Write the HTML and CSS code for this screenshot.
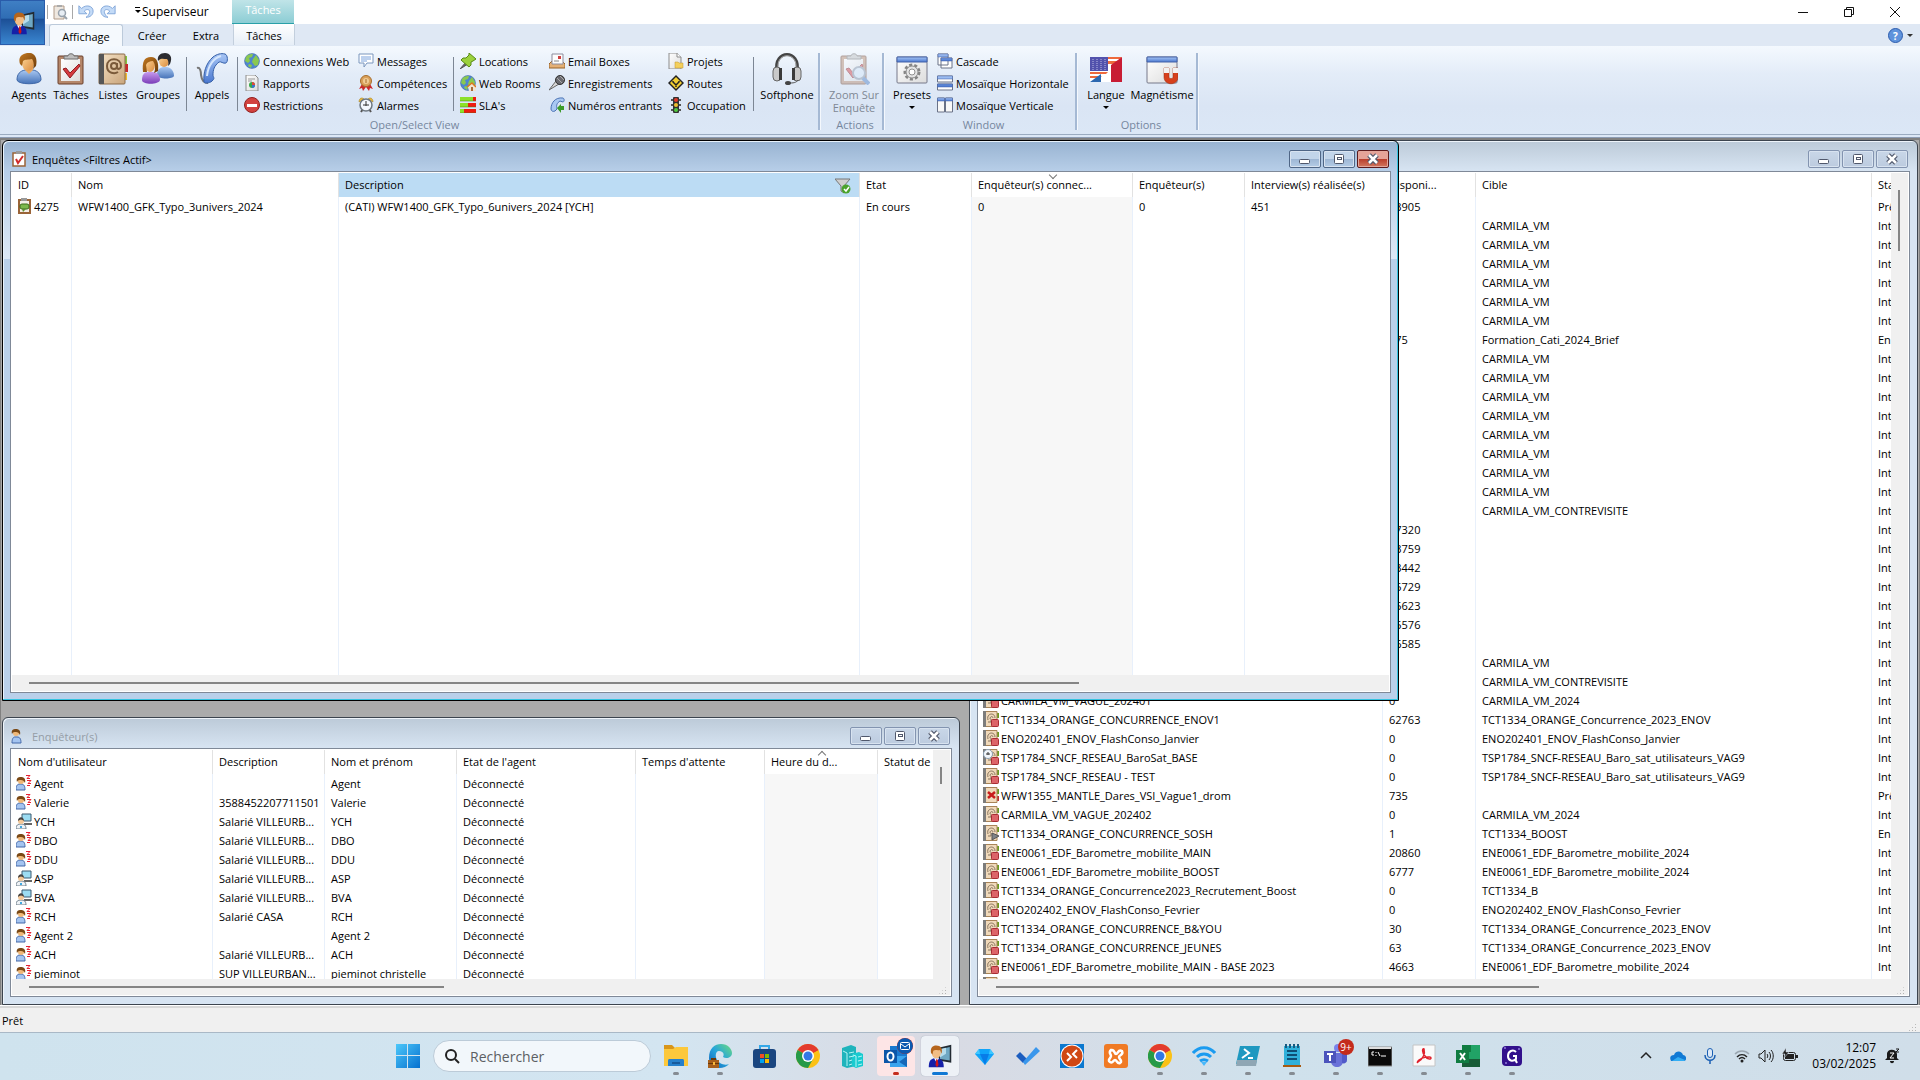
FILE: index.html
```html
<!DOCTYPE html>
<html lang="fr">
<head>
  <meta charset="UTF-8" />
  <meta name="viewport" content="width=device-width, initial-scale=1.0" />
  <title>Superviseur</title>
  <link rel="stylesheet" href="styles.css">
</head>

<body>
  <!-- icons -->
  <svg class="sprite" width="0" height="0" aria-hidden="true">
    <defs>
      <linearGradient id="gBlue" x1="0" y1="0" x2="0" y2="1"><stop offset="0" stop-color="#a9c8f2" /><stop offset="1" stop-color="#4673b8" /></linearGradient>
      <linearGradient id="gBar" x1="0" y1="0" x2="0" y2="1"><stop offset="0" stop-color="#a8c6f5" /><stop offset="1" stop-color="#4a78d0" /></linearGradient>
      <linearGradient id="gPurple" x1="0" y1="0" x2="0" y2="1"><stop offset="0" stop-color="#c79bee" /><stop offset="1" stop-color="#7a3cb8" /></linearGradient>
      <linearGradient id="gSkin" x1="0" y1="0" x2="1" y2="1"><stop offset="0" stop-color="#ffd89a" /><stop offset="1" stop-color="#d98a3c" /></linearGradient>
      <linearGradient id="gHair" x1="0" y1="0" x2="1" y2="1"><stop offset="0" stop-color="#c47a22" /><stop offset="1" stop-color="#6b3a08" /></linearGradient>
      <linearGradient id="gPaper" x1="0" y1="0" x2="1" y2="1"><stop offset="0" stop-color="#fff" /><stop offset="1" stop-color="#dcdcdc" /></linearGradient>
      <linearGradient id="gBook" x1="0" y1="0" x2="1" y2="1"><stop offset="0" stop-color="#f6e3c6" /><stop offset="1" stop-color="#c9a57c" /></linearGradient>
      <linearGradient id="gWin" x1="0" y1="0" x2="1" y2="1"><stop offset="0" stop-color="#4cc8fa" /><stop offset="1" stop-color="#0670cf" /></linearGradient>
      <linearGradient id="gEdge" x1="0" y1="1" x2="1" y2="0"><stop offset="0" stop-color="#0f5fb8" /><stop offset=".5" stop-color="#26a5dc" /><stop offset="1" stop-color="#6fdc7c" /></linearGradient>
    </defs>

    <symbol id="i-user" viewBox="0 0 32 32">
      <path d="M4 27c0-6 3-9 8-10h8c5 1 8 4 8 10-1 5-23 5-24 0z" fill="url(#gBlue)" stroke="#3f68a8" />
      <path d="M12 17l4 4 4-4v-3h-8z" fill="#e8a862" />
      <ellipse cx="15" cy="10" rx="6" ry="8" fill="url(#gSkin)" />
      <path d="M7 11c-2-6 1-10 7-11 7-1 11 4 9 13l-3 3c1-4 1-7-1-10-4 1-7 0-9 2l-1 5z" fill="url(#gHair)" />
    </symbol>
    <symbol id="i-task" viewBox="0 0 32 32">
      <rect x="3" y="3" width="25" height="28" rx="1" fill="#b5876a" stroke="#6a3f2a" />
      <path d="M6 6h19v22H6z" fill="url(#gPaper)" />
      <path d="M8 16l3-1 4 5 9-9 1 2-10 12z" fill="#d63a3e" stroke="#8e1c20" />
      <path d="M9 6V3h4c0-3 6-3 6 0h4v3z" fill="#bdbdbd" stroke="#6e6e6e" />
    </symbol>
    <symbol id="i-book" viewBox="0 0 32 32">
      <path d="M27 3h3v8h-3z" fill="#86c440" /><path d="M27 11h4v8h-4z" fill="#c8282c" /><path d="M27 20h3v7h-3z" fill="#f0b92e" />
      <rect x="2" y="1" width="26" height="30" rx="1" fill="url(#gBook)" stroke="#8a6a48" />
      <path d="M2 1h5v30H2z" fill="#565656" />
      <circle cx="17" cy="13" r="3" fill="none" stroke="#7a5a3a" stroke-width="2" />
      <path d="M20 10v5c2 2 4 0 4-2 0-9-14-9-14 0 0 8 8 8 11 6" fill="none" stroke="#7a5a3a" stroke-width="2" />
    </symbol>
    <symbol id="i-group" viewBox="0 0 32 32">
      <path d="M15 22c0-5 2-7 6-8h4c5 1 7 5 7 9-1 3-15 4-17-1z" fill="url(#gBlue)" />
      <ellipse cx="22" cy="8" rx="5" ry="6" fill="url(#gSkin)" />
      <path d="M16 8c-1-5 2-8 7-8 5 0 8 4 5 11l-2 2c1-4 0-6-1-7-3 0-6-1-8 1z" fill="#2c2c30" />
      <path d="M0 27c0-5 2-8 6-8h5c5 0 7 4 7 8-1 5-18 5-18 0z" fill="url(#gPurple)" />
      <ellipse cx="8" cy="12" rx="5" ry="7" fill="url(#gSkin)" />
      <path d="M1 19C0 9 2 4 9 4c6 0 8 6 7 14l-4 2c2-5 1-9-1-12-3 0-6 1-7 4l1 7z" fill="url(#gHair)" />
    </symbol>
    <symbol id="i-phone" viewBox="0 0 32 32">
      <path d="M1 15c3-1 4 3 4 7 1 7 4 8 7 8" fill="none" stroke="#777" stroke-width="2" />
      <path d="M29 1c3 1 3 8 1 9-3 1-5-2-7-1-5 4-6 8-6 13 0 2 2 3 0 5-2 3-8 4-9 2-1-9 2-19 9-25 4-3 8-4 12-3z" fill="url(#gBar)" stroke="#3560a8" />
      <path d="M25 3c-7 2-13 9-14 20" fill="none" stroke="#d5e6fc" stroke-width="2" />
    </symbol>
    <symbol id="i-globe" viewBox="0 0 16 16">
      <circle cx="8" cy="8" r="7.500" fill="#4f86cf" stroke="#3b63a0" stroke-width=".5" />
      <path d="M2 4c2-3 5-3 7-3l-1 3-3 1 1 3-2 2-3-2zM9 6l3-4 3 5-1 5-3 1-3-4zM5 11l3 1-1 3-3-2z" fill="#8ac850" />
    </symbol>
    <symbol id="i-report" viewBox="0 0 16 16">
      <path d="M2 0h9l3 3v13H2z" fill="url(#gPaper)" stroke="#8c8c8c" />
      <path d="M4 4h7M4 6h4" stroke="#999" />
      <circle cx="8" cy="10" r="3" fill="#38a84a" /><path d="M8 10V7a3 3 0 013 3z" fill="#e0483c" /><path d="M8 10h3a3 3 0 01-3 3z" fill="#3a70d0" />
    </symbol>
    <symbol id="i-stop" viewBox="0 0 16 16">
      <circle cx="8" cy="8" r="7.500" fill="#d2423f" stroke="#93211f" /><path d="M3 7h10v3H3z" fill="#fff" />
    </symbol>
    <symbol id="i-msg" viewBox="0 0 16 16">
      <path d="M1 1h14v9H9l-3 4v-4H1z" fill="#fff" stroke="#7b96bd" /><path d="M3 4h10M3 6h10M3 8h6" stroke="#7aa2dc" />
    </symbol>
    <symbol id="i-medal" viewBox="0 0 16 16">
      <path d="M4 9l-3 5 3-1 1 3 3-4 3 4 1-3 3 1-3-5z" fill="#cc2b2b" />
      <circle cx="8" cy="6" r="5.500" fill="#d9a05a" stroke="#a66d2c" /><circle cx="8" cy="6" r="3" fill="#f0cb94" /><path d="M8 4v4" stroke="#a66d2c" />
    </symbol>
    <symbol id="i-alarm" viewBox="0 0 16 16">
      <path d="M1 5c0-4 3-5 5-3zM15 5c0-4-3-5-5-3z" fill="#e9b93b" stroke="#9a7416" stroke-width=".5" />
      <path d="M3 15l2-3M13 15l-2-3" stroke="#555" stroke-width="2" />
      <circle cx="8" cy="8" r="6" fill="#f4f8ff" stroke="#6e7780" stroke-width="1.500" /><path d="M8 4v5M5 8h6" stroke="#333" />
    </symbol>
    <symbol id="i-pin" viewBox="0 0 16 16">
      <path d="M0 16l6-7 2 2z" fill="#666" stroke="#555" />
      <path d="M9 0l7 6-3 2-2 1v3l-2 2-8-7 2-2h3l3-3z" fill="#9bd13c" stroke="#588a14" />
    </symbol>
    <symbol id="i-globehome" viewBox="0 0 16 16">
      <use href="#i-globe" /><path d="M8 12l4-4 4 4v4H9z" fill="#f0e4d4" /><path d="M7 12l5-4 4 4" fill="none" stroke="#e07820" stroke-width="1.500" /><path d="M11 12h2v4h-2z" fill="#a86a3a" />
    </symbol>
    <symbol id="i-sla" viewBox="0 0 16 16">
      <path d="M0 0h16v4H0zM0 6h16v4H0zM0 12h16v4H0z" fill="#ee1c10" /><path d="M0 0h13v4H0zM0 6h8v4H0zM0 12h4v4H0z" fill="#8de02a" />
      <path d="M0 4h16M0 10h16M0 16h16" stroke="#3c7a10" stroke-width=".5" />
    </symbol>
    <symbol id="i-mail" viewBox="0 0 16 16">
      <path d="M0 11l3-3h10l3 3v4H0z" fill="#e4b076" stroke="#9a6428" /><path d="M3 1h11v10H3z" fill="#fdfdfd" stroke="#8c8c9c" /><path d="M9 3h3v3H9z" fill="#cf4040" /><path d="M5 8h5" stroke="#888" />
    </symbol>
    <symbol id="i-mic" viewBox="0 0 16 16">
      <path d="M0 15l7-9 3 3z" fill="#d8d8d8" stroke="#666" /><circle cx="11" cy="5" r="4.500" fill="#6a6a70" stroke="#333" /><path d="M8 3l5 5M11 1l4 4" stroke="#aaa" />
    </symbol>
    <symbol id="i-phonein" viewBox="0 0 16 16">
      <path d="M14 1c2 1 1 4 0 4l-3-1c-3 2-4 4-3 8l-2 2c-2 1-4 0-4-2 0-6 4-12 12-11z" fill="#a9c8f2" stroke="#4a72b4" /><path d="M8 11l4-4v2h3v4h-3v3z" fill="#3c9c2a" />
    </symbol>
    <symbol id="i-project" viewBox="0 0 16 16">
      <path d="M1 0h8l4 4v12H1z" fill="url(#gPaper)" stroke="#8c8c8c" /><path d="M9 0v4h4" fill="#fff" stroke="#8c8c8c" /><path d="M7 9h3l1 1h4v5H7z" fill="#f4cf5c" stroke="#c09428" stroke-width=".5" />
    </symbol>
    <symbol id="i-route" viewBox="0 0 16 16">
      <path d="M8 0l8 8-8 8-8-8z" fill="#222" /><path d="M8 2l6 6-6 6-6-6z" fill="#f3cf31" /><path d="M5 6v1l3 3 3-3V6M8 9v3" fill="none" stroke="#222" stroke-width="1.500" />
    </symbol>
    <symbol id="i-traffic" viewBox="0 0 16 16">
      <path d="M3 3h10M3 8h10M3 13h10" stroke="#555" stroke-width="2" /><rect x="5" y="0" width="6" height="16" rx="1" fill="#333" />
      <circle cx="8" cy="3" r="2" fill="#e03a2a" /><circle cx="8" cy="8" r="2" fill="#f0c030" /><circle cx="8" cy="13" r="2" fill="#50c840" />
    </symbol>
    <symbol id="i-headset" viewBox="0 0 32 32">
      <path d="M6 18C2-4 30-4 26 18" fill="none" stroke="#444" stroke-width="3" /><path d="M7 14C6-1 26-1 25 14" fill="none" stroke="#aaa" />
      <rect x="2" y="14" width="8" height="14" rx="4" fill="#c9c9c9" stroke="#666" /><rect x="22" y="14" width="8" height="14" rx="4" fill="#c9c9c9" stroke="#666" />
      <path d="M8 15h3v12H8zM21 15h3v12h-3z" fill="#3a3a3a" /><path d="M27 27c-2 3-5 3-9 3" fill="none" stroke="#555" /><ellipse cx="17" cy="30" rx="3" ry="2" fill="#444" />
    </symbol>
    <symbol id="i-zoom" viewBox="0 0 32 32">
      <use href="#i-task" /><circle cx="21" cy="20" r="6" fill="#d5e8fa" stroke="#8795a6" stroke-width="2" /><path d="M25 25l6 6" stroke="#4f7fc4" stroke-width="4" />
    </symbol>
    <symbol id="i-window" viewBox="0 0 32 32">
      <rect x="1" y="4" width="30" height="26" rx="1" fill="url(#gPaper)" stroke="#76798a" /><path d="M1 4h30v5H1z" fill="url(#gBar)" stroke="#4563a8" />
    </symbol>
    <symbol id="i-presets" viewBox="0 0 32 32">
      <use href="#i-window" /><circle cx="16" cy="19" r="7" fill="#e4e4e4" stroke="#858585" stroke-width="3" stroke-dasharray="3 2" /><circle cx="16" cy="19" r="6" fill="#e4e4e4" stroke="#909090" /><circle cx="16" cy="19" r="3" fill="#fff" stroke="#909090" />
    </symbol>
    <symbol id="i-cascade" viewBox="0 0 16 16">
      <path d="M1 1h10v11H1zM4 5h11v10H4z" fill="#fff" stroke="#6a7287" /><path d="M1 1h10v3H1zM4 5h11v3H4z" fill="url(#gBar)" stroke="#4563a8" stroke-width=".5" />
    </symbol>
    <symbol id="i-horiz" viewBox="0 0 16 16">
      <path d="M.5 1h15v6H.5zM.5 9h15v6H.5z" fill="#fff" stroke="#6a7287" /><path d="M.5 1h15v3H.5zM.5 9h15v3H.5z" fill="url(#gBar)" stroke="#4563a8" stroke-width=".5" />
    </symbol>
    <symbol id="i-vert" viewBox="0 0 16 16">
      <path d="M.5 1h7v14h-7zM8.500 1h7v14h-7z" fill="#f8f8f8" stroke="#6a7287" /><path d="M.5 1h7v3h-7zM8.500 1h7v3h-7z" fill="url(#gBar)" stroke="#4563a8" stroke-width=".5" />
    </symbol>
    <symbol id="i-flag" viewBox="0 0 32 32">
      <path d="M0 4h32v25H0z" fill="#fff" /><path d="M18 4h14l-2 2H18zM18 8h10l-3 3h-7zM0 19h18l-2 2H0zM0 23h12l-3 2H0z" fill="#ee6a3c" /><path d="M0 4h18v14H0z" fill="#5252ac" />
      <path d="M3 6v11M7 6v11M11 6v11M15 6v11" stroke="#b9b9e4" stroke-dasharray="1 1" /><path d="M21 12l11-8v25H21z" fill="#c81c34" /><path d="M0 29l11-8v8z" fill="#2c68b0" />
    </symbol>
    <symbol id="i-magnet" viewBox="0 0 32 32">
      <use href="#i-window" /><path d="M18 15h5v9c0 2 4 2 4 0v-9h5v9c0 9-14 9-14 0z" fill="#d6401c" stroke="#992408" stroke-width=".5" /><path d="M18 15h5v5h-5zM27 15h5v5h-5z" fill="#f1f1f1" />
    </symbol>
    <symbol id="i-boss" viewBox="0 0 32 32">
      <path d="M14 5l17-4v24l-17-3z" fill="#222b33" /><path d="M16 7l13-3v18l-13-2z" fill="#6fa8c4" /><path d="M16 7l8-2v8l-8 5z" fill="#b6dcec" />
      <path d="M1 31c0-8 2-11 8-12h4c6 1 8 5 8 12z" fill="#1420a8" /><path d="M8 19l3 5 4-5z" fill="#fff" /><path d="M11 20l2 1 1 7-2 3-2-3z" fill="#d01818" />
      <ellipse cx="11" cy="12" rx="6" ry="7" fill="#f2bd85" /><path d="M4 12C3 5 6 2 11 2c6 0 9 4 7 11l-2-5c-4 1-6-1-9 1l-1 5z" fill="#b5651d" />
    </symbol>
    <symbol id="i-preview" viewBox="0 0 16 16">
      <path d="M2 2h10v13H2z" fill="#efe8e0" stroke="#b09a88" /><path d="M5 1h5v2H5z" fill="#aaa" /><circle cx="10" cy="9" r="3.500" fill="#e8eef4" stroke="#98a2ac" stroke-width="1.500" /><path d="M12 12l3 3" stroke="#98a2ac" stroke-width="2" />
    </symbol>
    <symbol id="i-undo" viewBox="0 0 18 16">
      <path d="M1 1v9h9L7 7c3-3 7-2 6 2-1 2-2 4-4 5 5 0 8-3 8-7 0-6-8-8-13-3z" fill="#c4dbf7" stroke="#7ba1d6" />
    </symbol>
    <symbol id="i-funnel" viewBox="0 0 16 16">
      <path d="M0 1h15l-6 7v7l-3-2V8z" fill="#cfcfcf" stroke="#777" /><circle cx="11" cy="11" r="4.500" fill="#4aa32c" /><path d="M9 11l2 2 3-4" fill="none" stroke="#fff" stroke-width="1.500" />
    </symbol>
    <symbol id="i-tasksm" viewBox="0 0 16 16">
      <path d="M2 2h12v13H2z" fill="#fff" stroke="#9a6438" stroke-width="1.500" /><path d="M5 0h6v3H5z" fill="#999" /><path d="M5 8l2 4 5-7" fill="none" stroke="#d02c2c" stroke-width="2" />
    </symbol>
    <symbol id="i-taskmsg" viewBox="0 0 16 16">
      <path d="M3 2h11v13H3z" fill="#f5efe8" stroke="#9a6438" stroke-width="2" /><path d="M5 0h6v3H5z" fill="#999" /><rect x="4" y="6" width="9" height="5" rx="2" fill="#7cb84c" stroke="#3c6e1c" /><path d="M6 11l1 3 3-3z" fill="#5c9034" />
    </symbol>
    <symbol id="i-usersm" viewBox="0 0 16 16">
      <path d="M1 15c0-4 1-6 3-6h2c3 0 4 2 4 6z" fill="#a4c4f0" stroke="#4468a8" /><circle cx="5" cy="5" r="3" fill="#f0b878" /><path d="M1 6c-1-4 1-5 4-5s5 2 4 6c-1-2-2-3-4-3S2 4 1 6z" fill="#7a4814" />
    </symbol>
    <symbol id="i-sleep" viewBox="0 0 16 16">
      <path d="M0 15c0-4 1-6 4-6h1c3 0 4 2 4 6z" fill="#a4c4f0" stroke="#4468a8" /><circle cx="5" cy="6" r="3" fill="#f0b878" /><path d="M1 7C0 3 2 2 5 2s5 2 4 6C8 6 7 5 5 5S2 5 1 7z" fill="#7a4814" />
      <path d="M10 .5h4l-3 3h3M11 5.500h4l-3 3h3M11 10.500h3" fill="none" stroke="#e82030" />
    </symbol>
    <symbol id="i-pc" viewBox="0 0 16 16">
      <path d="M6 1h9v7H6z" fill="#9cdcf2" stroke="#3c5a70" /><path d="M8 10h8v2H8z" fill="#666" /><path d="M0 16c0-4 2-5 5-5s5 1 5 5z" fill="#eef2f6" stroke="#6c7c88" /><circle cx="5" cy="8" r="3" fill="#f4c898" /><path d="M2 8c0-5 6-5 6 0-2-2-4-2-6 0z" fill="#444" /><path d="M4 13h2v2H4z" fill="#40a8e0" />
    </symbol>
    <symbol id="i-rec" viewBox="0 0 16 16">
      <path d="M14 2h2v5h-2z" fill="#6a9c20" /><path d="M1 .5h13v15H1z" fill="#f0d9ba" stroke="#a88458" /><path d="M0 0h3v16H0z" fill="#7c7c7c" /><path d="M5 9c-2-7 7-8 7-2M7 8c0-3 3-3 3-1M8 8v3H5" fill="none" stroke="#85725c" />
    </symbol>
    <symbol id="i-recstop" viewBox="0 0 16 16"><use href="#i-rec" /><rect x="8.500" y="8.500" width="7" height="7" rx="1" fill="#dc6468" stroke="#a82c34" /></symbol>
    <symbol id="i-recclock" viewBox="0 0 16 16"><use href="#i-recstop" /><circle cx="5" cy="5" r="4.500" fill="#f2f6fa" stroke="#8ca0b4" /><path d="M5 3v3M3 5h4" stroke="#333" /></symbol>
    <symbol id="i-recx" viewBox="0 0 16 16"><path d="M14 2h2v5h-2z" fill="#6a9c20" /><path d="M14 9h2v5h-2z" fill="#c03030" /><path d="M1 .5h13v15H1z" fill="#f0d9ba" stroke="#a88458" /><path d="M0 0h3v16H0z" fill="#7c7c7c" /><path d="M5 5l7 6M12 5l-7 6" stroke="#c81c1c" stroke-width="2.500" /></symbol>
    <symbol id="i-recplay" viewBox="0 0 16 16"><use href="#i-rec" /><path d="M9 8l7 3-7 4z" fill="#808488" stroke="#555" /></symbol>

    <!-- window buttons -->
    <symbol id="i-min" viewBox="0 0 30 16"><rect x="9.500" y="8.500" width="10" height="4" rx="1" fill="#fff" stroke="#50586c" /></symbol>
    <symbol id="i-max" viewBox="0 0 30 16"><rect x="10.500" y="3.500" width="9" height="9" rx="1" fill="#fff" stroke="#50586c" /><rect x="13.500" y="6.500" width="4" height="2" fill="#fff" stroke="#50586c" /></symbol>
    <symbol id="i-close" viewBox="0 0 30 16"><path d="M11 4l8 8M19 4l-8 8" stroke="#50586c" stroke-width="5" /><path d="M11 4l8 8M19 4l-8 8" stroke="#fff" stroke-width="2.500" /></symbol>

    <!-- taskbar -->
    <symbol id="t-start" viewBox="0 0 24 24"><path d="M0 0h11v11H0zM12 0h12v11H12zM0 12h11v12H0zM12 12h12v12H12z" fill="url(#gWin)" /></symbol>
    <symbol id="t-folder" viewBox="0 0 24 24"><path d="M0 1h8l3 3v3H0z" fill="#d9961a" /><path d="M0 5h9l3-2h12v19H0z" fill="#fcc83c" /><path d="M4 17c0-2 1-2 2-2h12c1 0 2 0 2 2v5H4z" fill="#2580cc" /><path d="M8 18h8v2H8z" fill="#165a9c" /></symbol>
    <symbol id="t-edge" viewBox="0 0 24 24"><path d="M1 14C1 4 7 0 13 0c7 0 11 5 11 9 0 5-6 6-9 4 2-4-1-6-4-6-4 0-5 8 1 12 3 2 7 2 9 1-5 6-20 6-20-6z" fill="url(#gEdge)" /><path d="M0 16h11v8H0z" fill="#a8601c" /><path d="M3 14h5v2H3zM0 19h11v1H0z" fill="#6a3808" /><path d="M5 18h2v3H5z" fill="#f8b83c" /></symbol>
    <symbol id="t-store" viewBox="0 0 24 24"><path d="M8 6V2h9v4" fill="none" stroke="#35a8e8" stroke-width="2" /><rect x="1" y="5" width="23" height="19" rx="3" fill="#1a4680" /><path d="M8 10h4v4H8z" fill="#f25022" /><path d="M13 10h4v4h-4z" fill="#7fba00" /><path d="M8 15h4v4H8z" fill="#00a4ef" /><path d="M13 15h4v4h-4z" fill="#ffb900" /></symbol>
    <symbol id="t-chrome" viewBox="0 0 24 24"><circle cx="12" cy="12" r="12" fill="#fbc116" /><path d="M12 12L1.600 6A12 12 0 0122.400 6z" fill="#e33b2e" /><path d="M12 12L1.600 6A12 12 0 0012 24l5-9z" fill="#269a48" /><path d="M12 6h10.400L18 8z" fill="#e33b2e" /><circle cx="12" cy="12" r="6" fill="#fff" /><circle cx="12" cy="12" r="4.500" fill="#3478e5" /></symbol>
    <symbol id="t-server" viewBox="0 0 24 24"><path d="M2 4l9-3 5 2v19l-9 2-5-2z" fill="#1fb4bc" /><path d="M12 10l7-2 4 2v12l-7 2-4-2z" fill="#18cbd0" /><path d="M3 7l4 2V22M9 9l5-1M9 13l5-1M9 17l3-1M9 21l3-1M13 11l3 1v11M18 13l4-1M18 17l4-1M18 21l4-1" fill="none" stroke="#b4f4f4" /></symbol>
    <symbol id="t-outlook" viewBox="0 0 24 24"><path d="M6 2h17v21H6z" fill="#1a78cf" /><path d="M6 12h17v11H6z" fill="#3aa4ee" /><path d="M6 12l9 6 8-6v11z" fill="#1667b8" /><path d="M0 6h13v13H0z" fill="#0c56a8" /><ellipse cx="6.500" cy="12.500" rx="3" ry="4" fill="none" stroke="#fff" stroke-width="2" /></symbol>
    <symbol id="t-mailbadge" viewBox="0 0 16 16"><circle cx="8" cy="8" r="8" fill="#0c59b0" /><rect x="3.500" y="4.500" width="9" height="7" rx="1" fill="none" stroke="#fff" /><path d="M4 6l4 3 4-3" fill="none" stroke="#fff" /></symbol>
    <symbol id="t-gem" viewBox="0 0 24 24"><path d="M7 5h11l4 5-9 11L3 10z" fill="#10a4fa" /><path d="M7 5l1 5H3zM18 5l-1 5h5z" fill="#40c8ff" /><path d="M8 10h9l-4 11z" fill="#087ce8" /></symbol>
    <symbol id="t-todo" viewBox="0 0 24 24"><path d="M0 12l4-4 7 7-4 4z" fill="#1c5dbf" /><path d="M7 18L20 3l4 4L9 21z" fill="#3a97ec" /></symbol>
    <symbol id="t-rdp" viewBox="0 0 24 24"><path d="M0 0h24v24H0z" fill="#0b78cf" /><circle cx="12" cy="12" r="11.500" fill="#fff" /><circle cx="12" cy="12" r="10.500" fill="#d04814" /><path d="M7 9l4 4-4 4M17 6l-4 4 4 4" fill="none" stroke="#fff" stroke-width="2" /></symbol>
    <symbol id="t-xampp" viewBox="0 0 24 24"><rect width="24" height="24" rx="3" fill="#f07a24" /><path d="M7 6c4-1 3 4 5 4s2-5 6-3c2 4-3 4-3 6s4 4 1 6c-3 1-3-3-5-3s-2 4-5 2 1-4 1-6-3-3 0-6z" fill="#f07a24" stroke="#fff" stroke-width="2.500" /></symbol>
    <symbol id="t-wifi" viewBox="0 0 24 24"><path d="M1 9c6-7 16-7 22 0M5 13c4-4 10-4 14 0M8 17c3-2 5-2 8 0" fill="none" stroke="#1b9bf0" stroke-width="3" /><path d="M9 18h6l-3 4z" fill="#48b8fa" /></symbol>
    <symbol id="t-shell" viewBox="0 0 24 24"><path d="M4 2h20l-4 18H0z" fill="#1e98c0" /><path d="M1 16h20l-1 6H0z" fill="#8fa6b4" /><path d="M8 5l5 4-7 5M12 14h5" fill="none" stroke="#fff" stroke-width="2" /></symbol>
    <symbol id="t-note" viewBox="0 0 24 24"><path d="M4 2h16v19H4z" fill="#30b0da" /><path d="M3 21h18v2H3z" fill="#a85a10" /><path d="M7 7h10M7 11h10M7 15h10" stroke="#0e4e74" stroke-width="2" /><path d="M6 0v4M10 0v4M14 0v4M18 0v4" stroke="#175a80" stroke-width="2" /></symbol>
    <symbol id="t-teams" viewBox="0 0 24 24"><circle cx="14" cy="4" r="4" fill="#7b83eb" /><path d="M7 9h12v8c0 8-12 8-12 0z" fill="#6870d8" /><path d="M18 9h5v7c0 3-3 4-5 3z" fill="#5059c9" /><path d="M0 7h12v12H0z" fill="#4b53bc" /><path d="M3 10h6M6 10v7" stroke="#fff" stroke-width="2" /></symbol>
    <symbol id="t-cmd" viewBox="0 0 24 24"><path d="M0 3h24v19H0z" fill="#0a0a0a" stroke="#8a8a8a" /><path d="M1 3h22v2H1z" fill="#ddd" /><path d="M6 8H4v3h2M8 8v1M8 11v1M10 8l2 4M13 12h5" fill="none" stroke="#fff" /></symbol>
    <symbol id="t-pdf" viewBox="0 0 24 24"><path d="M1 1h22v21H1z" fill="#fafafa" stroke="#c4c4c4" /><path d="M6 18c6-4 7-9 6-13-2-1-2 4 1 7 2 3 6 4 6 2s-9-1-12 2c-2 2-2 3-1 2z" fill="none" stroke="#e0202c" stroke-width="1.500" /></symbol>
    <symbol id="t-excel" viewBox="0 0 24 24"><path d="M6 1h18v22H6z" fill="#21a366" /><path d="M6 1h9v7H6z" fill="#107c41" /><path d="M6 15h18v8H6z" fill="#185c37" /><path d="M0 6h13v13H0z" fill="#107c41" /><path d="M4 9l5 7M9 9l-5 7" stroke="#fff" stroke-width="2" /></symbol>
    <symbol id="t-shot" viewBox="0 0 24 24"><rect x="2" y="2" width="20" height="20" rx="4" fill="#32108c" /><path d="M16 8c-3-3-8-1-8 4s5 6 8 3v-3h-3M15 15l2 4" fill="none" stroke="#fff" stroke-width="2" /><path d="M4 4h2M18 5h2M5 19h2" stroke="#c0b0ff" /></symbol>
    <symbol id="s-chevron" viewBox="0 0 16 16"><path d="M3 10l5-5 5 5" fill="none" stroke="#222" stroke-width="1.500" /></symbol>
    <symbol id="s-cloud" viewBox="0 0 16 16"><path d="M1 13c-2-4 0-6 3-6 2-5 8-4 9 0 4 0 4 6 1 6z" fill="#1179d4" /><path d="M2 13l6-4 7 3-1 1z" fill="#33aef4" /></symbol>
    <symbol id="s-mic" viewBox="0 0 16 16"><rect x="5.500" y=".5" width="5" height="9" rx="2.500" fill="#dce9f8" stroke="#1a5fb4" /><path d="M3 7c0 7 10 7 10 0M8 12v4" fill="none" stroke="#1a5fb4" stroke-width="1.500" /></symbol>
    <symbol id="s-wifi" viewBox="0 0 16 16"><path d="M1 6c4-4 10-4 14 0" fill="none" stroke="#9aa6b0" stroke-width="1.500" /><path d="M3 9c3-3 7-3 10 0M5 11c2-2 4-2 6 0" fill="none" stroke="#222" stroke-width="1.500" /><circle cx="8" cy="13" r="1.500" fill="#222" /></symbol>
    <symbol id="s-vol" viewBox="0 0 16 16"><path d="M1 6h2l4-4v12l-4-4H1z" fill="none" stroke="#222" /><path d="M9 6c1 1 1 3 0 4M11 4c2 2 2 6 0 8M13 2c3 3 3 9 0 12" fill="none" stroke="#222" /></symbol>
    <symbol id="s-bat" viewBox="0 0 16 16"><rect x="1.500" y="4.500" width="12" height="8" rx="2" fill="none" stroke="#222" /><path d="M3 6h9v5H3zM14 7h2v3h-2z" fill="#222" /><path d="M4 0L0 6h3l-1 4 5-6H4z" fill="#222" stroke="#d0deea" stroke-width=".5" /></symbol>
    <symbol id="s-bell" viewBox="0 0 16 16"><path d="M1 12l2-2V6c0-5 9-6 10 0v4l2 2zM6 13h4c0 3-4 3-4 0z" fill="#1a1a1a" /><path d="M6 5h4l-4 5h4" fill="none" stroke="#fff" /><path d="M12 1h3l-3 3h3" fill="none" stroke="#1a1a1a" /></symbol>
  </svg>

  <header class="titlebar">
    <button class="app-button" aria-label="Menu"><svg><use href="#i-boss" /></svg></button>
    <div class="title-main">
      <div class="title-row">
        <button class="qat" aria-label="Aperçu"><svg><use href="#i-preview" /></svg></button>
        <span class="qat-sep"></span>
        <button class="qat" aria-label="Annuler"><svg><use href="#i-undo" /></svg></button>
        <button class="qat flip" aria-label="Rétablir"><svg><use href="#i-undo" /></svg></button>
        <span class="qat-more"></span>
        <span class="app-title">Superviseur</span>
        <span class="context-title">Tâches</span>
        <div class="sys-buttons">
          <button aria-label="Réduire"><svg viewBox="0 0 10 10"><path d="M0 5.500h10" /></svg></button>
          <button aria-label="Restaurer"><svg viewBox="0 0 10 10"><path d="M.5 2.500h7v7h-7zM2.500 2V.5h7v7H8" /></svg></button>
          <button aria-label="Fermer"><svg viewBox="0 0 10 10"><path d="M0 0l10 10M10 0L0 10" /></svg></button>
        </div>
      </div>
      <nav class="tabs">
        <button class="tab active">Affichage</button>
        <button class="tab">Créer</button>
        <button class="tab">Extra</button>
        <button class="tab context">Tâches</button>
        <button class="help" aria-label="Aide">?</button>
      </nav>
    </div>
  </header>

  <div class="ribbon">
    <section class="group group-view">
      <div class="group-body">
        <button class="big"><svg><use href="#i-user" /></svg>Agents</button>
        <button class="big"><svg><use href="#i-task" /></svg>Tâches</button>
        <button class="big"><svg><use href="#i-book" /></svg>Listes</button>
        <button class="big w48"><svg><use href="#i-group" /></svg>Groupes</button>
        <span class="sep"></span>
        <button class="big"><svg><use href="#i-phone" /></svg>Appels</button>
        <span class="sep"></span>
        <div class="stack c1">
          <button><svg><use href="#i-globe" /></svg>Connexions Web</button>
          <button><svg><use href="#i-report" /></svg>Rapports</button>
          <button><svg><use href="#i-stop" /></svg>Restrictions</button>
        </div>
        <div class="stack c2">
          <button><svg><use href="#i-msg" /></svg>Messages</button>
          <button><svg><use href="#i-medal" /></svg>Compétences</button>
          <button><svg><use href="#i-alarm" /></svg>Alarmes</button>
        </div>
        <span class="sep"></span>
        <div class="stack c3">
          <button><svg><use href="#i-pin" /></svg>Locations</button>
          <button><svg><use href="#i-globehome" /></svg>Web Rooms</button>
          <button><svg><use href="#i-sla" /></svg>SLA's</button>
        </div>
        <div class="stack c4">
          <button><svg><use href="#i-mail" /></svg>Email Boxes</button>
          <button><svg><use href="#i-mic" /></svg>Enregistrements</button>
          <button><svg><use href="#i-phonein" /></svg>Numéros entrants</button>
        </div>
        <div class="stack c5">
          <button><svg><use href="#i-project" /></svg>Projets</button>
          <button><svg><use href="#i-route" /></svg>Routes</button>
          <button><svg><use href="#i-traffic" /></svg>Occupation</button>
        </div>
        <span class="sep"></span>
        <button class="big w58"><svg><use href="#i-headset" /></svg>Softphone</button>
      </div>
      <div class="group-label">Open/Select View</div>
    </section>
    <section class="group group-actions">
      <div class="group-body">
        <button class="big w58" disabled><svg><use href="#i-zoom" /></svg>Zoom Sur<span>Enquête</span></button>
      </div>
      <div class="group-label">Actions</div>
    </section>
    <section class="group group-window">
      <div class="group-body">
        <button class="big drop"><svg><use href="#i-presets" /></svg>Presets</button>
        <div class="stack">
          <button><svg><use href="#i-cascade" /></svg>Cascade</button>
          <button><svg><use href="#i-horiz" /></svg>Mosaïque Horizontale</button>
          <button><svg><use href="#i-vert" /></svg>Mosaïque Verticale</button>
        </div>
      </div>
      <div class="group-label">Window</div>
    </section>
    <section class="group group-options">
      <div class="group-body">
        <button class="big drop"><svg><use href="#i-flag" /></svg>Langue</button>
        <button class="big w66"><svg><use href="#i-magnet" /></svg>Magnétisme</button>
      </div>
      <div class="group-label">Options</div>
    </section>
  </div>

  <main class="mdi">
    <section class="window win-lists">
      <div class="win-title">
        <span class="caption"></span>
        <div class="win-buttons">
          <button aria-label="Réduire"><svg><use href="#i-min" /></svg></button>
          <button aria-label="Agrandir"><svg><use href="#i-max" /></svg></button>
          <button aria-label="Fermer"><svg><use href="#i-close" /></svg></button>
        </div>
      </div>
      <div class="client">
        <div class="list-row">
          <div class="list">
            <table>
              <colgroup><col class="w404"><col class="w93"><col class="w396"><col></colgroup>
              <thead><tr><th>Nom</th><th>Disponi...</th><th>Cible</th><th>Statut</th></tr></thead>
              <tbody id="listRows"></tbody>
            </table>
          </div>
          <div class="vscroll"><span class="thumb"></span></div>
        </div>
        <div class="hscroll"><span class="thumb"></span><span class="grip"></span></div>
      </div>
    </section>

    <section class="window win-agents">
      <div class="win-title">
        <svg class="win-icon"><use href="#i-usersm" /></svg>
        <span class="caption">Enquêteur(s)</span>
        <div class="win-buttons">
          <button aria-label="Réduire"><svg><use href="#i-min" /></svg></button>
          <button aria-label="Agrandir"><svg><use href="#i-max" /></svg></button>
          <button aria-label="Fermer"><svg><use href="#i-close" /></svg></button>
        </div>
      </div>
      <div class="client">
        <div class="list-row">
          <div class="list">
            <table>
              <colgroup><col class="w201"><col class="w112"><col class="w132"><col class="w179"><col class="w129"><col class="w113"><col></colgroup>
              <thead><tr><th>Nom d'utilisateur</th><th>Description</th><th>Nom et prénom</th><th>Etat de l'agent</th><th>Temps d'attente</th><th class="sort-up">Heure du d...</th><th>Statut de</th></tr></thead>
              <tbody id="agentRows"></tbody>
            </table>
          </div>
          <div class="vscroll"><span class="thumb"></span></div>
        </div>
        <div class="hscroll"><span class="thumb"></span><span class="grip"></span></div>
      </div>
    </section>

    <section class="window win-surveys focused">
      <div class="win-title">
        <svg class="win-icon"><use href="#i-tasksm" /></svg>
        <span class="caption">Enquêtes &lt;Filtres Actif&gt;</span>
        <div class="win-buttons">
          <button aria-label="Réduire"><svg><use href="#i-min" /></svg></button>
          <button aria-label="Agrandir"><svg><use href="#i-max" /></svg></button>
          <button class="close" aria-label="Fermer"><svg><use href="#i-close" /></svg></button>
        </div>
      </div>
      <div class="client">
        <div class="list-row">
          <div class="list">
            <table>
              <colgroup><col class="w60"><col class="w267"><col class="w521"><col class="w112"><col class="w161"><col class="w112"><col></colgroup>
              <thead><tr><th>ID</th><th>Nom</th><th class="filtered">Description<svg><use href="#i-funnel" /></svg></th><th>Etat</th><th class="sort-down">Enquêteur(s) connec...</th><th>Enquêteur(s)</th><th>Interview(s) réalisée(s)</th></tr></thead>
              <tbody>
                <tr><td class="first"><svg><use href="#i-taskmsg" /></svg>4275</td><td>WFW1400_GFK_Typo_3univers_2024</td><td>(CATI) WFW1400_GFK_Typo_6univers_2024 [YCH]</td><td>En cours</td><td class="sorted">0</td><td>0</td><td>451</td></tr>
                <tr class="filler"><td></td><td></td><td></td><td></td><td class="sorted"></td><td></td><td></td></tr>
              </tbody>
            </table>
          </div>
        </div>
        <div class="hscroll"><span class="thumb"></span></div>
      </div>
    </section>
  </main>

  <div class="statusbar">Prêt<span class="grip"></span></div>

  <footer class="taskbar">
    <div class="apps">
      <button aria-label="Démarrer"><svg><use href="#t-start" /></svg></button>
      <label class="search">
        <svg viewBox="0 0 16 16"><circle cx="7" cy="7" r="5" /><path d="M11 11l4 4" /></svg>
        <input type="text" placeholder="Rechercher" aria-label="Rechercher">
      </label>
      <button class="open" aria-label="Explorateur"><svg><use href="#t-folder" /></svg></button>
      <button class="open" aria-label="Edge"><svg><use href="#t-edge" /></svg></button>
      <button aria-label="Store"><svg><use href="#t-store" /></svg></button>
      <button aria-label="Chrome"><svg><use href="#t-chrome" /></svg></button>
      <button aria-label="Serveurs"><svg><use href="#t-server" /></svg></button>
      <button class="open alert" aria-label="Outlook"><svg><use href="#t-outlook" /></svg><svg class="badge"><use href="#t-mailbadge" /></svg></button>
      <button class="current" aria-label="Superviseur"><svg><use href="#i-boss" /></svg></button>
      <button aria-label="Gem"><svg><use href="#t-gem" /></svg></button>
      <button aria-label="To Do"><svg><use href="#t-todo" /></svg></button>
      <button aria-label="Bureau à distance"><svg><use href="#t-rdp" /></svg></button>
      <button aria-label="XAMPP"><svg><use href="#t-xampp" /></svg></button>
      <button class="open" aria-label="Chrome"><svg><use href="#t-chrome" /></svg></button>
      <button class="open" aria-label="Wi-Fi"><svg><use href="#t-wifi" /></svg></button>
      <button class="open" aria-label="PowerShell"><svg><use href="#t-shell" /></svg></button>
      <button class="open" aria-label="Bloc-notes"><svg><use href="#t-note" /></svg></button>
      <button class="open" aria-label="Teams"><svg><use href="#t-teams" /></svg><span class="badge">9+</span></button>
      <button class="open" aria-label="Invite de commandes"><svg><use href="#t-cmd" /></svg></button>
      <button class="open" aria-label="Acrobat"><svg><use href="#t-pdf" /></svg></button>
      <button class="open" aria-label="Excel"><svg><use href="#t-excel" /></svg></button>
      <button class="open" aria-label="Capture"><svg><use href="#t-shot" /></svg></button>
    </div>
    <div class="tray">
      <svg class="far"><use href="#s-chevron" /></svg>
      <svg class="far"><use href="#s-cloud" /></svg>
      <svg class="far"><use href="#s-mic" /></svg>
      <svg><use href="#s-wifi" /></svg>
      <svg><use href="#s-vol" /></svg>
      <svg><use href="#s-bat" /></svg>
      <div class="clock"><span>12:07</span><span>03/02/2025</span></div>
      <svg><use href="#s-bell" /></svg>
    </div>
  </footer>

  <script src="script.js"></script>
</body>
</html>
```
FILE: styles.css
```css
* {
  box-sizing: border-box;
}

html, body {
  height: 100%;
}

body {
  margin: 0;
  display: flex;
  flex-direction: column;
  overflow: hidden;
  font-family: "Open Sans", "Noto Sans", sans-serif;
  font-size: 11px;
  color: #000;
  background: #ababab;
}

button {
  font: inherit;
  color: inherit;
  background: none;
  border: none;
  padding: 0;
}

svg {
  display: block;
  flex: none;
}

.sprite {
  position: absolute;
}

/* title bar and tabs */
.titlebar {
  display: flex;
  height: 46px;
  background: linear-gradient(#fff 24px, #dfe8f4 24px);
}

.app-button {
  width: 45px;
  height: 45px;
  padding: 9px 10px;
  border: 1px solid #2a5caa;
  background: linear-gradient(#3f7fc4, #2f6db4 40%, #1c4f96 42%, #3a86d0);
}

.app-button svg {
  width: 24px;
  height: 24px;
}

.title-main {
  flex: 1;
  display: flex;
  flex-direction: column;
}

.title-row {
  display: flex;
  align-items: center;
  height: 24px;
  padding-left: 2px;
}

.title-row::before, .qat-sep {
  content: "";
  width: 1px;
  height: 14px;
  background: #a8a8a8;
}

.qat {
  margin: 0 4px;
}

.qat svg {
  width: 16px;
  height: 16px;
}

.qat-sep + .qat {
  margin: 0 2px 0 5px;
}

.flip {
  transform: scaleX(-1);
}

.qat-more {
  position: relative;
  margin: 2px 1px 0 15px;
  border: 3px solid transparent;
  border-top-color: #000;
}

.qat-more::before {
  content: "";
  position: absolute;
  top: -6px;
  left: -3px;
  width: 5px;
  height: 1px;
  background: #000;
}

.app-title {
  width: 90px;
  font-size: 12px;
  line-height: 20px;
}

.context-title {
  width: 62px;
  height: 24px;
  line-height: 20px;
  text-align: center;
  color: #fff;
  background: linear-gradient(#c0e4e8, #8ccdd4);
  border-bottom: 1px solid #2aa0a8;
}

.sys-buttons {
  display: flex;
  margin: 0 2px 0 auto;
}

.sys-buttons button {
  width: 46px;
  height: 22px;
  display: flex;
  align-items: center;
  justify-content: center;
}

.sys-buttons svg {
  width: 10px;
  height: 10px;
  fill: none;
  stroke: #111;
}

.tabs {
  flex: 1;
  display: flex;
  padding-left: 4px;
  border-bottom: 1px solid #bccada;
}

.tab {
  width: 54px;
  height: 21px;
  padding-top: 2px;
  text-align: center;
}

.tab.active {
  width: 74px;
  height: 22px;
  margin-right: 2px;
  border: 1px solid #bccada;
  border-bottom: none;
  border-radius: 3px 3px 0 0;
  background: #f5f9fd;
}

.tab.context {
  width: 62px;
  border: 1px solid #c3cfdd;
  border-width: 0 1px;
  background: linear-gradient(#fff, #e6eef7);
}

.help {
  position: relative;
  width: 15px;
  height: 15px;
  margin: 4px 17px 0 auto;
  border: 1px solid #2c5cae;
  border-radius: 8px;
  background: #5f93dc;
  color: #fff;
  font-size: 10px;
  font-weight: bold;
  line-height: 12px;
}

.help::after {
  content: "";
  position: absolute;
  top: 5px;
  left: 18px;
  border: 3px solid transparent;
  border-top-color: #333;
}

/* ribbon */
.ribbon {
  display: flex;
  height: 92px;
  padding: 3px 0 0 8px;
  background: linear-gradient(#f4f9fe, #e3ecf8 28px, #dae5f4 60px, #dbe7f6 88px);
  border-bottom: 1px solid #8d9cb3;
  box-shadow: inset 0 -2px 0 #dbe7f6, inset 0 -3px 0 #9aabc0;
}

.group {
  display: flex;
  flex-direction: column;
  height: 84px;
  margin-top: 1px;
  position: relative;
}

.group::after {
  content: "";
  position: absolute;
  right: 0;
  top: 3px;
  height: 77px;
  width: 2px;
  background: #a5b9d4;
  border-right: 1px solid #f4f8fd;
}

.group-view { width: 813px; }
.group-actions { width: 64px; padding-left: 4px; }
.group-window { width: 193px; padding-left: 4px; }
.group-options { width: 121px; padding-left: 5px; }

.group-body {
  flex: 1;
  display: flex;
}

.group-label {
  height: 17px;
  line-height: 16px;
  text-align: center;
  color: #76869e;
}

.big {
  display: flex;
  flex-direction: column;
  align-items: center;
  flex: none;
  width: 42px;
  padding-top: 3px;
  line-height: 13px;
  white-space: nowrap;
}

.big svg {
  width: 32px;
  height: 32px;
  margin-bottom: 3px;
}

.w48 { width: 48px; }
.w58 { width: 58px; }
.w66 { width: 66px; }

.big:disabled {
  color: #808894;
}

.big:disabled svg {
  opacity: .45;
}

.drop {
  width: 46px;
}

.drop::after {
  content: "";
  margin-top: 5px;
  border: 3px solid transparent;
  border-top-color: #000;
}

.sep {
  width: 1px;
  height: 54px;
  margin: 7px 4px 0;
  background: #7c8694;
}

.stack {
  display: flex;
  flex-direction: column;
  padding: 0 2px;
}

.stack button {
  display: flex;
  align-items: center;
  gap: 3px;
  height: 22px;
  white-space: nowrap;
}

.stack svg {
  width: 16px;
  height: 16px;
}

.c1 { width: 114px; }
.c2 { width: 93px; }
.c3 { width: 89px; }
.c4 { width: 119px; }
.c5 { width: 83px; }

/* child windows */
.mdi {
  flex: 1;
  position: relative;
  overflow: hidden;
  background: #ababab;
  border: 1px solid #808080;
  border-width: 2px 1px 0;
}

.window {
  position: absolute;
  display: flex;
  flex-direction: column;
  padding: 0 7px 7px;
  border: 1px solid #3c444e;
  border-radius: 6px 6px 0 0;
  background: linear-gradient(#bccad8, #d7e4f2 30px);
  box-shadow: inset 1px 1px 0 #eef4fa;
}

.window.focused {
  border-color: #000;
  background: linear-gradient(#98b3d1, #b7cee8 30px, #dce8f5 118px, #b9d0ea 118px);
  box-shadow: inset -1px -1px 0 #35c3e0, inset 1px 1px 0 #e8f2fb;
}

.win-lists {
  left: 968px;
  right: 1px;
  top: 0;
  bottom: 0;
}

.win-agents {
  left: 1px;
  top: 577px;
  width: 958px;
  bottom: 0;
}

.win-surveys {
  left: 1px;
  top: 0;
  width: 1397px;
  height: 561px;
}

.win-title {
  display: flex;
  align-items: center;
  height: 30px;
  padding: 6px 2px 0 1px;
}

.win-icon {
  width: 16px;
  height: 16px;
  margin-right: 5px;
}

.win-agents .caption {
  color: #959da6;
}

.win-buttons {
  display: flex;
  gap: 2px;
  margin-left: auto;
}

.win-buttons button {
  width: 32px;
  height: 18px;
  border: 1px solid #8394b0;
  border-radius: 2px;
  background: linear-gradient(#c9d7e8, #bccbdf);
  box-shadow: inset 0 0 0 1px #d8e3f0;
}

.focused .win-buttons button {
  border-color: #4f6686;
  background: linear-gradient(#c2d5ea 48%, #9db6d4 50%, #b4cce6);
}

.focused .win-buttons .close {
  border-color: #5c1a1c;
  background: linear-gradient(#e5a398 48%, #b93c2a 50%, #d27860);
  box-shadow: inset 0 0 0 1px #e2a79c;
}

.win-buttons svg {
  width: 30px;
  height: 16px;
}

.client {
  flex: 1;
  min-height: 0;
  display: flex;
  flex-direction: column;
  padding: 1px;
  border: 1px solid #7f8998;
  background: #fff;
}

.list-row {
  flex: 1;
  min-height: 0;
  display: flex;
}

.list {
  flex: 1;
  min-width: 0;
  overflow: hidden;
}

.vscroll {
  width: 17px;
  padding: 17px 7px 0;
  background: #f0f0f0;
}

.thumb {
  display: block;
  width: 2px;
  height: 61px;
  background: #858585;
}

.win-agents .vscroll .thumb {
  height: 17px;
}

.hscroll {
  display: flex;
  justify-content: space-between;
  height: 16px;
  padding: 7px 3px 0 17px;
  background: #f0f0f0;
}

.hscroll .thumb {
  height: 2px;
  width: 543px;
}

.win-agents .hscroll .thumb { width: 415px; }
.win-surveys .hscroll .thumb { width: 1050px; }

.grip {
  width: 9px;
  height: 9px;
  background: radial-gradient(#b4b4b4 1px, transparent 1px) 0 0 / 3px 3px;
  clip-path: polygon(100% 0, 100% 100%, 0 100%);
}

/* tables */
table {
  width: 100%;
  height: 100%;
  table-layout: fixed;
  border-collapse: separate;
  border-spacing: 0;
}

.w60 { width: 60px; }
.w93 { width: 93px; }
.w112 { width: 112px; }
.w113 { width: 113px; }
.w129 { width: 129px; }
.w132 { width: 132px; }
.w161 { width: 161px; }
.w179 { width: 179px; }
.w201 { width: 201px; }
.w267 { width: 267px; }
.w396 { width: 396px; }
.w404 { width: 404px; }
.w521 { width: 521px; }

th, td {
  height: 19px;
  padding: 0 0 0 6px;
  border-right: 1px solid #e8f0fb;
  font-weight: normal;
  text-align: left;
  line-height: 18px;
  white-space: nowrap;
  overflow: hidden;
}

th {
  position: relative;
  height: 24px;
  border-right-color: #e2e2e2;
}

th:last-child, td:last-child {
  border-right: none;
}

td.first {
  padding-left: 4px;
}

td.first svg {
  display: inline-block;
  width: 16px;
  height: 16px;
  margin-right: 2px;
  vertical-align: top;
}

.filler td {
  height: auto;
}

.filtered {
  background: #bcdcf4;
}

.filtered svg {
  position: absolute;
  right: 8px;
  top: 5px;
  width: 16px;
  height: 16px;
}

.sorted {
  background: #f7f7f7;
}

.sort-up::after, .sort-down::after {
  content: "";
  position: absolute;
  left: 54px;
  top: 2px;
  width: 5px;
  height: 5px;
  border: solid #777;
  border-width: 1px 0 0 1px;
  transform: rotate(45deg);
}

.sort-down::after {
  left: 78px;
  top: -1px;
  transform: rotate(225deg);
}

/* status bar */
.statusbar {
  display: flex;
  justify-content: space-between;
  align-items: center;
  height: 27px;
  padding: 2px 3px 0 2px;
  background: #f0f0f0;
  border-top: 1px solid #fff;
  box-shadow: inset 0 2px 0 #d8d8d8;
}

.statusbar .grip {
  margin-top: 14px;
}

/* taskbar */
.taskbar {
  display: grid;
  grid-template-columns: 1fr auto 1fr;
  height: 48px;
  border-top: 1px solid #a9b8c6;
  background: linear-gradient(90deg, #cfe3ee, #d3e5f1 35%, #d9dae3 48%, #d5dde7 56%, #cfe1ec 66%, #d0dee9);
}

.apps {
  grid-column: 2;
  display: flex;
}

.apps button {
  position: relative;
  display: flex;
  align-items: center;
  justify-content: center;
  width: 44px;
  height: 46px;
}

.apps button svg {
  width: 24px;
  height: 24px;
}

.apps .open::after, .apps .current::after {
  content: "";
  position: absolute;
  bottom: 4px;
  width: 6px;
  height: 3px;
  border-radius: 2px;
  background: #858b92;
}

.apps .alert, .apps .current {
  width: 38px;
  height: 40px;
  margin: 3px;
  border-radius: 4px;
  background: #fde5e6;
}

.apps .current {
  background: #edf1f6;
  box-shadow: 0 0 1px #8a98a8;
}

.apps .alert::after, .apps .current::after {
  bottom: 1px;
  background: #c42b1c;
}

.apps .current::after {
  width: 16px;
  background: #0f78d4;
}

.apps .badge {
  position: absolute;
  top: 6px;
  right: 4px;
  width: 16px;
  height: 16px;
  border-radius: 8px;
  background: #c42b1c;
  color: #fff;
  font-size: 10px;
  line-height: 16px;
}

.apps .alert svg.badge {
  top: 2px;
  right: 2px;
  width: 16px;
  height: 16px;
}

.search {
  display: flex;
  align-items: center;
  width: 218px;
  height: 32px;
  margin: 7px 3px 0;
  padding-left: 10px;
  border: 1px solid #bccbd8;
  border-radius: 16px;
  background: #f2f7fb;
}

.search svg {
  width: 16px;
  height: 16px;
  fill: none;
  stroke: #222;
  stroke-width: 2;
}

.search input {
  width: 160px;
  margin-left: 8px;
  border: none;
  outline: none;
  background: none;
  font: inherit;
  font-size: 14px;
}

.search input::placeholder {
  color: #5c5f63;
}

.tray {
  display: flex;
  align-items: center;
  justify-content: flex-end;
  gap: 8px;
  padding: 0 20px 2px 0;
}

.tray svg {
  width: 16px;
  height: 16px;
}

.tray .far {
  margin-right: 8px;
}

.clock {
  display: flex;
  flex-direction: column;
  width: 70px;
  text-align: right;
  font-size: 12px;
  line-height: 16px;
}
```
FILE: script.js
```js
// name, available, target, state, icon
const lists = [
  ["WFW1400_GFK_Typo", "13905", "", "Prêt"],
  ...Array(6).fill(["CARMILA_VM", "0", "CARMILA_VM"]),
  ["Formation_Cati", "175", "Formation_Cati_2024_Brief", "En cours"],
  ...Array(8).fill(["CARMILA_VM", "0", "CARMILA_VM"]),
  ["CARMILA_VM", "0", "CARMILA_VM_CONTREVISITE"],
  ["TCT1334_ORANGE", "17320", ""],
  ["TCT1334_ORANGE", "13759", ""],
  ["TCT1334_ORANGE", "13442", ""],
  ["TCT1334_ORANGE", "15729", ""],
  ["TCT1334_ORANGE", "15623", ""],
  ["TCT1334_ORANGE", "15576", ""],
  ["TCT1334_ORANGE", "16585", ""],
  ["CARMILA_VM", "0", "CARMILA_VM"],
  ["CARMILA_VM", "0", "CARMILA_VM_CONTREVISITE"],
  ["CARMILA_VM_VAGUE_202401", "0", "CARMILA_VM_2024"],
  ["TCT1334_ORANGE_CONCURRENCE_ENOV1", "62763", "TCT1334_ORANGE_Concurrence_2023_ENOV"],
  ["ENO202401_ENOV_FlashConso_Janvier", "0", "ENO202401_ENOV_FlashConso_Janvier"],
  ["TSP1784_SNCF_RESEAU_BaroSat_BASE", "0", "TSP1784_SNCF-RESEAU_Baro_sat_utilisateurs_VAG9", "Interrompu", "recclock"],
  ["TSP1784_SNCF_RESEAU - TEST", "0", "TSP1784_SNCF-RESEAU_Baro_sat_utilisateurs_VAG9"],
  ["WFW1355_MANTLE_Dares_VSI_Vague1_drom", "735", "", "Prêt", "recx"],
  ["CARMILA_VM_VAGUE_202402", "0", "CARMILA_VM_2024"],
  ["TCT1334_ORANGE_CONCURRENCE_SOSH", "1", "TCT1334_BOOST", "En cours", "recplay"],
  ["ENE0061_EDF_Barometre_mobilite_MAIN", "20860", "ENE0061_EDF_Barometre_mobilite_2024"],
  ["ENE0061_EDF_Barometre_mobilite_BOOST", "6777", "ENE0061_EDF_Barometre_mobilite_2024"],
  ["TCT1334_ORANGE_Concurrence2023_Recrutement_Boost", "0", "TCT1334_B"],
  ["ENO202402_ENOV_FlashConso_Fevrier", "0", "ENO202402_ENOV_FlashConso_Fevrier"],
  ["TCT1334_ORANGE_CONCURRENCE_B&YOU", "30", "TCT1334_ORANGE_Concurrence_2023_ENOV"],
  ["TCT1334_ORANGE_CONCURRENCE_JEUNES", "63", "TCT1334_ORANGE_Concurrence_2023_ENOV"],
  ["ENE0061_EDF_Barometre_mobilite_MAIN - BASE 2023", "4663", "ENE0061_EDF_Barometre_mobilite_2024"],
  ["", "", "", " "]
];

// login, description, full name, icon
const agents = [
  ["Agent", "", "Agent"],
  ["Valerie", "3588452207711501", "Valerie"],
  ["YCH", "Salarié VILLEURB...", "YCH", "pc"],
  ["DBO", "Salarié VILLEURB...", "DBO"],
  ["DDU", "Salarié VILLEURB...", "DDU"],
  ["ASP", "Salarié VILLEURB...", "ASP", "pc"],
  ["BVA", "Salarié VILLEURB...", "BVA", "pc"],
  ["RCH", "Salarié CASA", "RCH"],
  ["Agent 2", "", "Agent 2"],
  ["ACH", "Salarié VILLEURB...", "ACH"],
  ["pieminot", "SUP VILLEURBAN...", "pieminot christelle"]
];

function addRow(body, icon, cells, sorted) {
  const tr = body.insertRow();
  cells.forEach((text, i) => {
    const td = tr.insertCell();
    td.textContent = text;
    if (i === sorted) td.className = 'sorted';
  });
  tr.cells[0].className = 'first';
  tr.cells[0].insertAdjacentHTML('afterbegin', `<svg><use href="#i-${icon}" /></svg>`);
}

const listRows = document.getElementById('listRows');
lists.forEach(([name, free, target, state = 'Interrompu', icon = 'recstop']) => {
  addRow(listRows, icon, [name, free, target, state]);
});

const agentRows = document.getElementById('agentRows');
agents.forEach(([login, desc, name, icon = 'sleep']) => {
  addRow(agentRows, icon, [login, desc, name, 'Déconnecté', '', '', ''], 5);
});
```
